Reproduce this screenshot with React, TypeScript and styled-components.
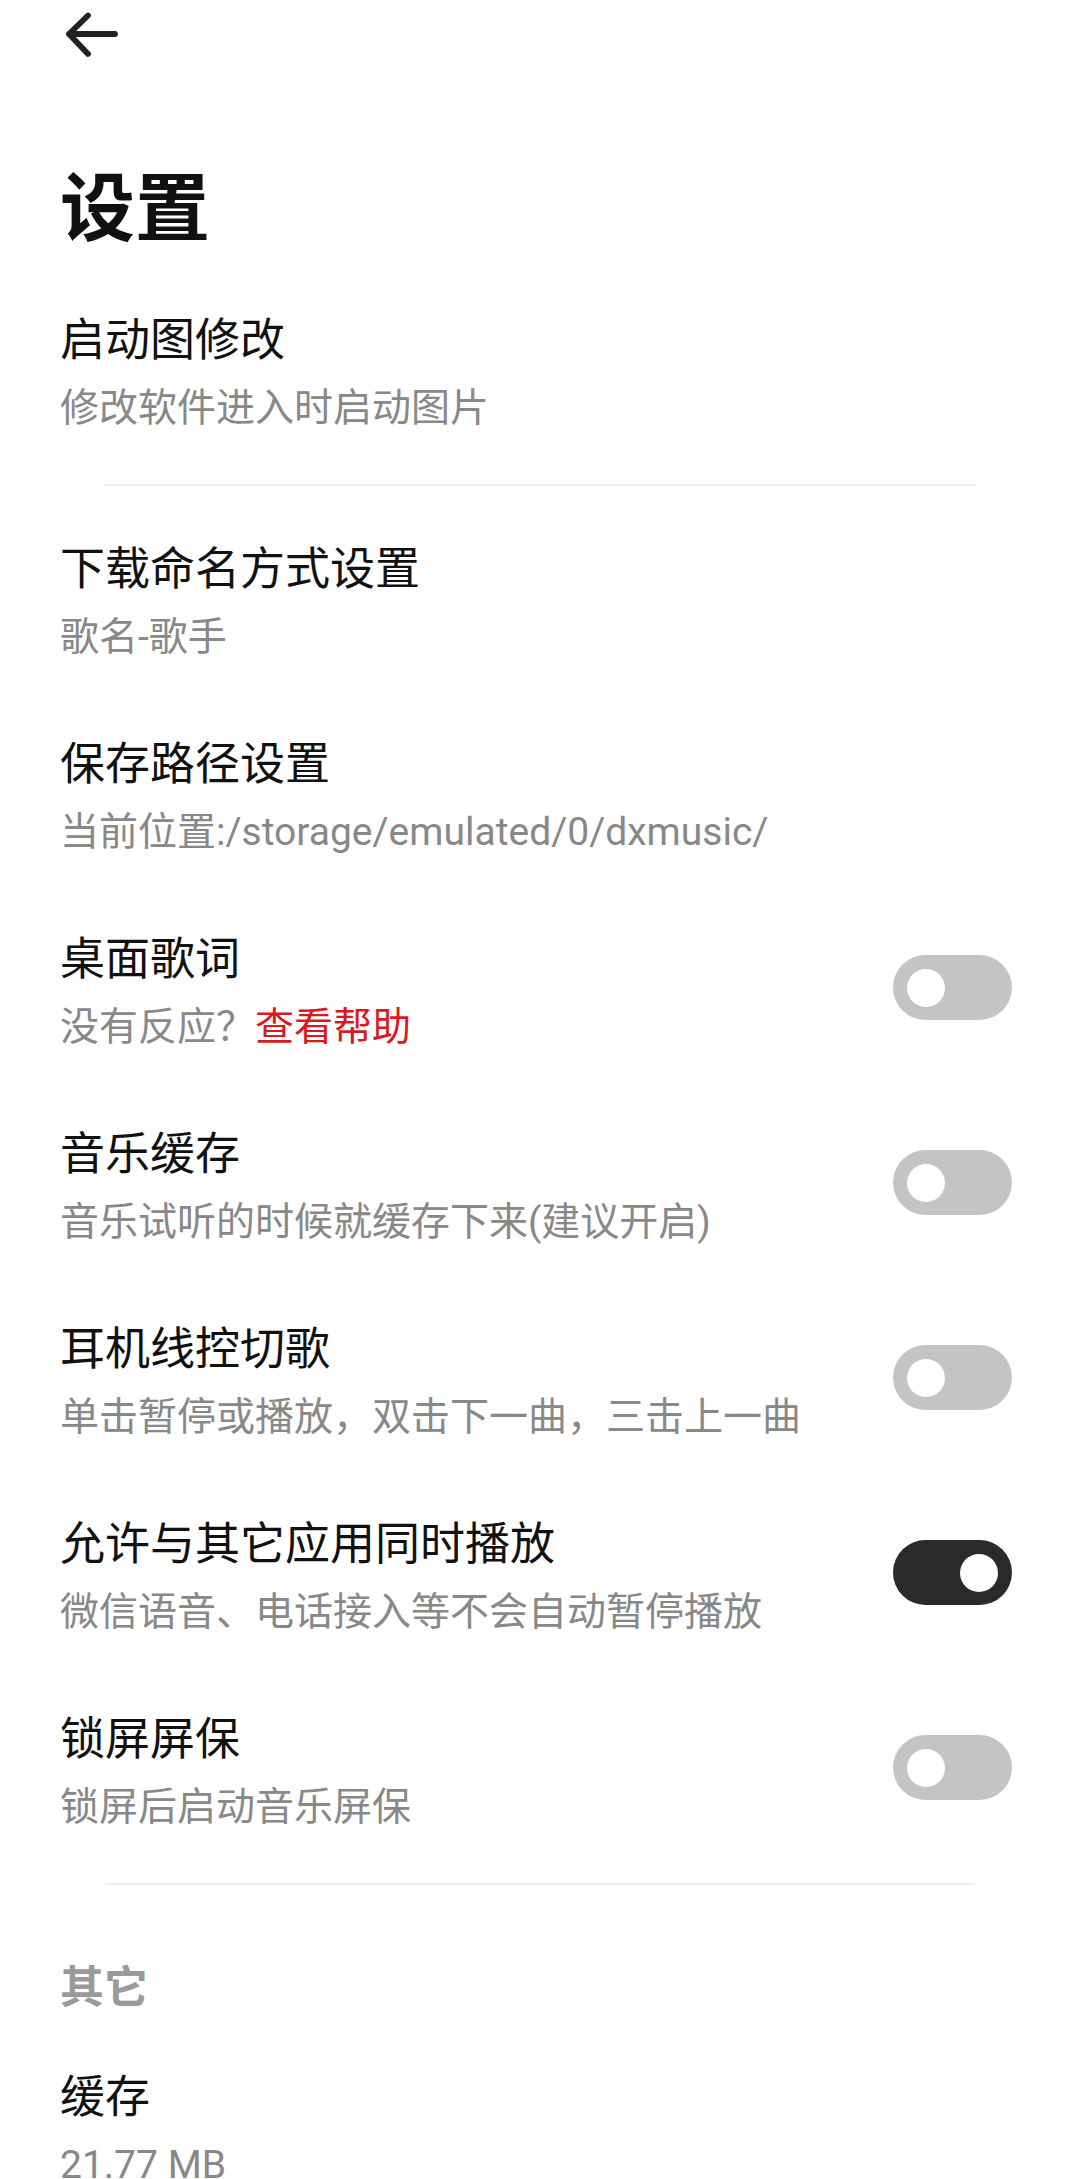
import React, { useState } from "react";
import styled, { createGlobalStyle, css } from "styled-components";

// Interfaces
interface SwitchProps {
  on: boolean;
}

interface SettingItem {
  id: string;
  title: string;
  desc: string;
  link?: string;
  toggle?: boolean;
}

const GlobalStyle = createGlobalStyle`
  html, body {
    margin: 0;
    padding: 0;
    background: #ffffff;
  }

  body {
    font-family: Roboto, "Noto Sans CJK SC", "Noto Sans", sans-serif;
    color: #111111;
    -webkit-font-smoothing: antialiased;
  }
`;

const TOP_ITEMS: SettingItem[] = [
  { id: "splash", title: "启动图修改", desc: "修改软件进入时启动图片" },
];

const MAIN_ITEMS: SettingItem[] = [
  { id: "naming", title: "下载命名方式设置", desc: "歌名-歌手" },
  { id: "path", title: "保存路径设置", desc: "当前位置:/storage/emulated/0/dxmusic/" },
  { id: "lyric", title: "桌面歌词", desc: "没有反应？", link: "查看帮助", toggle: true },
  { id: "cache", title: "音乐缓存", desc: "音乐试听的时候就缓存下来(建议开启)", toggle: true },
  { id: "wire", title: "耳机线控切歌", desc: "单击暂停或播放，双击下一曲，三击上一曲", toggle: true },
  { id: "mix", title: "允许与其它应用同时播放", desc: "微信语音、电话接入等不会自动暂停播放", toggle: true },
  { id: "lock", title: "锁屏屏保", desc: "锁屏后启动音乐屏保", toggle: true },
];

const OTHER_ITEMS: SettingItem[] = [{ id: "size", title: "缓存", desc: "21.77 MB" }];

export default function App() {
  const [switches, setSwitches] = useState<Record<string, boolean>>({
    lyric: false,
    cache: false,
    wire: false,
    mix: true,
    lock: false,
  });

  const renderRow = (item: SettingItem) => (
    <Row key={item.id}>
      <RowText>
        <RowTitle>{item.title}</RowTitle>
        <RowDesc>
          {item.desc}
          {item.link && <HelpLink>{item.link}</HelpLink>}
        </RowDesc>
      </RowText>
      {item.toggle && (
        <Switch
          on={!!switches[item.id]}
          onClick={() => setSwitches((s) => ({ ...s, [item.id]: !s[item.id] }))}
        >
          <Knob on={!!switches[item.id]} />
        </Switch>
      )}
    </Row>
  );

  return (
    <>
      <GlobalStyle />
      <Page>
        <TopBar>
          <BackButton aria-label="返回">
            <svg width="60" height="60" viewBox="0 0 60 60" fill="none">
              <path
                d="M11 29 H57 M11 29 L30 10.5 M11 29 L30 49"
                stroke="#222"
                strokeWidth="5.8"
                strokeLinecap="round"
                strokeLinejoin="round"
              />
            </svg>
          </BackButton>
        </TopBar>

        <PageTitle>设置</PageTitle>

        {TOP_ITEMS.map(renderRow)}
        <Divider />
        {MAIN_ITEMS.map(renderRow)}
        <Divider />

        <SectionLabel>其它</SectionLabel>
        {OTHER_ITEMS.map(renderRow)}
      </Page>
    </>
  );
}

const Page = styled.div`
  width: 1080px;
  min-height: 2179px;
  background: #ffffff;
  overflow: hidden;
`;

const TopBar = styled.div`
  height: 70px;
  display: flex;
  align-items: center;
  padding-left: 58px;
`;

const BackButton = styled.button`
  display: flex;
  align-items: center;
  justify-content: center;
  width: 60px;
  height: 60px;
  padding: 0;
  border: none;
  background: transparent;
  cursor: pointer;
`;

const PageTitle = styled.h1`
  margin: 89px 0 16px;
  padding-left: 60px;
  font-size: 75px;
  line-height: 100px;
  font-weight: 700;
  color: #111111;
`;

const Row = styled.div`
  display: flex;
  align-items: center;
  justify-content: space-between;
  padding: 34px 68px 34px 60px;
`;

const RowText = styled.div`
  display: flex;
  flex-direction: column;
  min-width: 0;
`;

const RowTitle = styled.div`
  font-size: 45px;
  line-height: 64px;
  color: #111111;
  white-space: nowrap;
`;

const RowDesc = styled.div`
  margin-top: 7px;
  font-size: 39px;
  line-height: 56px;
  color: #888888;
  white-space: nowrap;
`;

const HelpLink = styled.span`
  color: #d61a1e;
  cursor: pointer;
`;

const Switch = styled.div<SwitchProps>`
  flex-shrink: 0;
  position: relative;
  width: 119px;
  height: 65px;
  margin-bottom: 8px;
  border-radius: 33px;
  background: #c4c4c4;
  cursor: pointer;

  ${(props) =>
    props.on &&
    css`
      background: #2a2a2a;
    `}
`;

const Knob = styled.span<SwitchProps>`
  position: absolute;
  top: 13.5px;
  left: 14px;
  width: 38px;
  height: 38px;
  border-radius: 50%;
  background: #ffffff;

  ${(props) =>
    props.on &&
    css`
      left: 67px;
    `}
`;

const Divider = styled.div`
  height: 2px;
  margin: 14px 105px 18px;
  background: #eeeeee;
`;

const SectionLabel = styled.div`
  margin: 71px 0 12px;
  padding-left: 60px;
  font-size: 44px;
  line-height: 64px;
  font-weight: 700;
  color: #9a9a9a;
`;
